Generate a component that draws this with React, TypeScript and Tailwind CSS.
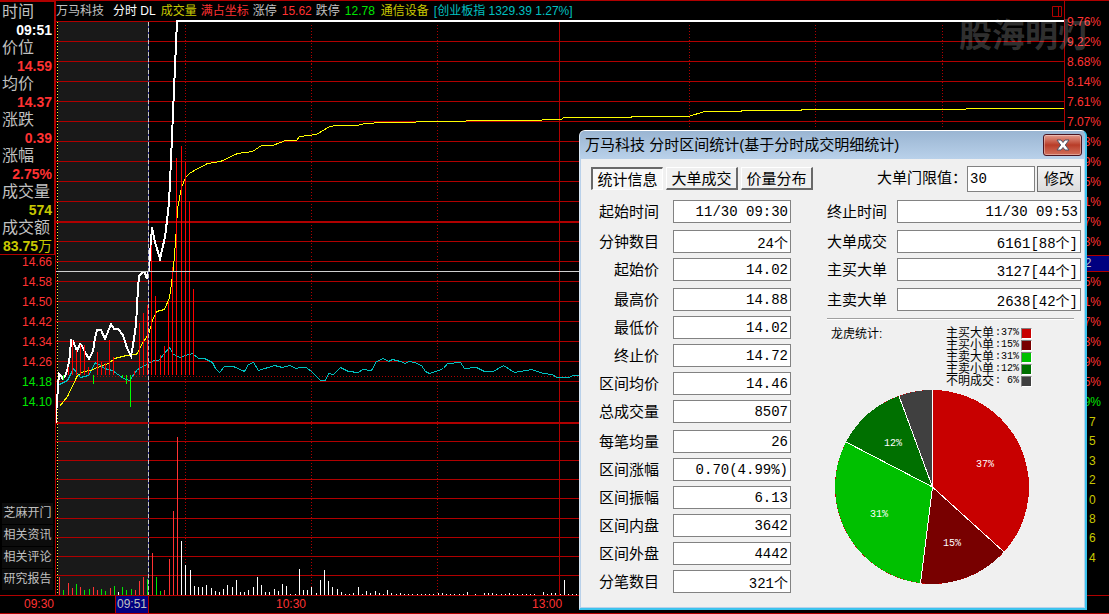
import { useState } from "react";
import clsx from "clsx";

type Row = { label: string; value: string };
type Bar = [x: number, y: number, color?: string];

const RED = "#b00000";
const UP = "#ff3232";
const DOWN = "#00e600";

const quotes = [
  { label: "时间", value: "09:51", tone: "text-white" },
  { label: "价位", value: "14.59", tone: "text-[#ff3232]" },
  { label: "均价", value: "14.37", tone: "text-[#ff3232]" },
  { label: "涨跌", value: "0.39", tone: "text-[#ff3232]" },
  { label: "涨幅", value: "2.75%", tone: "text-[#ff3232]" },
  { label: "成交量", value: "574", tone: "text-[#c8c800]" },
  { label: "成交额", value: "83.75万", tone: "text-[#c8c800]" },
];

const prices = ["14.66", "14.58", "14.50", "14.42", "14.34", "14.26", "14.18", "14.10"];

const percents = [
  "9.76%", "9.22%", "8.68%", "8.14%", "7.61%", "7.07%", "6.53%", "5.99%", "5.45%", "4.91%",
  "4.37%", "3.83%", "3.02", "2.75%", "2.21%", "1.67%", "1.13%", "0.59%", "0.05%", "0.49%",
];

const volumes = ["7", "5", "3", "2", "0", "8", "6", "4"];

const links = ["芝麻开门", "相关资讯", "相关评论", "研究报告"];

// Rows are grouped so that the wider gaps fall between groups
const leftGroups: Row[][] = [
  [{ label: "起始时间", value: "11/30 09:30" }],
  [
    { label: "分钟数目", value: "24个" },
    { label: "起始价", value: "14.02" },
  ],
  [
    { label: "最高价", value: "14.88" },
    { label: "最低价", value: "14.02" },
    { label: "终止价", value: "14.72" },
    { label: "区间均价", value: "14.46" },
    { label: "总成交量", value: "8507" },
  ],
  [
    { label: "每笔均量", value: "26" },
    { label: "区间涨幅", value: "0.70(4.99%)" },
    { label: "区间振幅", value: "6.13" },
    { label: "区间内盘", value: "3642" },
    { label: "区间外盘", value: "4442" },
    { label: "分笔数目", value: "321个" },
  ],
];

const rightGroups: Row[][] = [
  [{ label: "终止时间", value: "11/30 09:53" }],
  [
    { label: "大单成交", value: "6161[88个]" },
    { label: "主买大单", value: "3127[44个]" },
  ],
  [{ label: "主卖大单", value: "2638[42个]" }],
];

const legend = [
  { label: "主买大单", value: "37%", color: "bg-[#c80000]" },
  { label: "主买小单", value: "15%", color: "bg-[#780000]" },
  { label: "主卖大单", value: "31%", color: "bg-[#00c000]" },
  { label: "主卖小单", value: "12%", color: "bg-[#007000]" },
  { label: "不明成交", value: "6%", color: "bg-[#404040]" },
];

const tabs = ["统计信息", "大单成交", "价量分布"];

const gridRows = [
  21, 41, 61, 81, 101, 121, 141, 161, 181, 201, 241, 261, 281, 301, 321, 341, 361, 381, 401,
  441, 460, 479, 498, 518, 537, 556, 575,
];
const gridCols = [185, 311, 437, 689, 815, 942];

const priceLine =
  "55,422 56,422 56,415 58,387 59,374 61,376 63,379 66,374 68,367 70,355 71,340 73,341 77,351 80,344 82,346 85,352 89,359 93,351 95,338 97,330 101,330 105,339 111,324 114,329 118,329 123,335 127,348 131,356 133,345 136,325 138,288 139,276 143,272 145,273 147,279 149,268 150,255 152,227 155,242 160,259 165,237 168,212 169,203 171,160 174,90 177,21 1064,21";
const averageLine =
  "59,406 67,396 77,375 83,371 90,370 97,367 108,363 114,358 126,355 136,354 143,341 148,334 152,320 156,311 164,309 169,297 173,268 176,227 177,208 181,187 185,177 189,173 192,171 207,163 220,161 237,153 252,151 261,145 272,145 280,142 285,140 296,140 299,136 316,134 329,126 336,125 356,125 365,123 382,122 415,122 416,121 465,121 466,120 541,120 542,119 561,119 563,117 630,117 632,116 688,116 704,111 740,111 742,110 800,110 802,109 965,109 966,108 1064,108";
const indexLine =
  "59,384 67,380 73,368 80,377 88,375 95,362 100,365 104,368 112,370 123,378 129,380 137,369 148,363 153,360 158,360 164,353 169,347 173,354 180,357 185,355 192,353 198,358 204,358 212,362 215,368 219,372 224,366 233,366 244,371 248,364 253,362 258,370 274,365 282,367 289,365 296,368 299,367 306,367 312,372 320,380 325,380 328,373 333,374 340,367 348,371 358,372 362,369 371,370 376,361 383,358 388,361 392,359 400,361 405,363 408,361 414,362 421,365 425,371 429,373 438,370 443,368 447,363 460,362 464,368 476,367 484,371 493,371 503,365 514,372 531,369 543,373 552,374 556,377 568,377 573,375 580,375";

// Strength bars grow from the 375 line, up in red and down in green
const strength: Bar[] = [
  [63, 380], [68, 367], [72, 340], [76, 350], [80, 345], [84, 345], [88, 367], [93, 384],
  [97, 352], [101, 362], [105, 363], [109, 340], [113, 357], [122, 378], [126, 384], [130, 407],
  [134, 371], [139, 323], [143, 313], [147, 305], [151, 245], [155, 296], [160, 355], [164, 346],
  [168, 302], [172, 267], [176, 158], [181, 146], [185, 162], [189, 201], [193, 289],
];

const volumeBars: Bar[] = [
  [59, 577, UP], [63, 590, DOWN], [68, 583, UP], [72, 588, UP], [76, 584, DOWN], [80, 587, UP],
  [84, 590, DOWN], [89, 589, DOWN], [93, 587, UP], [97, 590, UP], [101, 589, DOWN],
  [105, 591, DOWN], [110, 588, UP], [114, 586, DOWN], [118, 592], [122, 587, DOWN],
  [126, 590, DOWN], [131, 589, DOWN], [135, 590, UP], [139, 581, UP], [143, 577, UP],
  [147, 579, DOWN], [152, 553, UP], [156, 577, DOWN], [160, 591, DOWN], [164, 590, UP],
  [169, 559, UP], [173, 511, UP], [177, 437, UP], [181, 541], [185, 565], [190, 570],
  [194, 586], [198, 587], [202, 587], [206, 585], [211, 588], [215, 591], [219, 592],
  [223, 589], [227, 585], [232, 587], [236, 580], [240, 592], [244, 592], [248, 590],
  [253, 587], [257, 577], [261, 585], [265, 592], [269, 592], [274, 589], [278, 591],
  [282, 584], [286, 586], [290, 594], [295, 594], [299, 569], [303, 590], [307, 590],
  [311, 587], [316, 593], [320, 580], [324, 570], [328, 581], [332, 587], [337, 589],
  [341, 592], [345, 594], [349, 594], [353, 593], [358, 587], [362, 594], [366, 591],
  [370, 593], [375, 591], [379, 593], [383, 594], [387, 590], [391, 593], [396, 594],
  [400, 593], [404, 594], [408, 594], [412, 594], [417, 594], [421, 594], [425, 594],
  [429, 594], [433, 594], [438, 593], [442, 593], [446, 594], [450, 594], [454, 594],
  [459, 594], [463, 594], [467, 592], [475, 594], [484, 593], [488, 593], [492, 593],
  [496, 594], [501, 594], [505, 594], [509, 593], [513, 594], [517, 594], [522, 594],
  [526, 594], [530, 594], [534, 594], [543, 592], [547, 594], [551, 593], [555, 593],
  [560, 594], [564, 580], [568, 594], [572, 594], [576, 594],
];

function Chart() {
  return (
    <svg
      className="block w-full flex-1 min-h-0"
      viewBox="56 20 1008 575"
      preserveAspectRatio="none"
      shapeRendering="crispEdges"
      fill="none"
    >
      <rect x="58" y="22" width="90" height="573" fill="#191919" />
      {gridRows.map((y) => (
        <rect key={y} x="55" y={y} width="1010" height="1" fill={RED} />
      ))}
      <g transform="translate(0.5 0.5)">
        {gridCols.map((x) => (
          <line key={x} x1={x} x2={x} y1="24" y2="595" stroke={RED} strokeDasharray="1 2" />
        ))}
        <line x1="93" x2="1064" y1="376" y2="376" stroke={RED} strokeDasharray="1 2" />
        <line x1="57" x2="57" y1="21" y2="595" stroke="#ffff32" strokeDasharray="1 2" />
      </g>
      <rect x="559" y="21" width="1" height="574" fill={RED} />
      <rect x="55" y="221" width="1010" height="2" fill={RED} />
      <rect x="55" y="422" width="1010" height="2" fill={RED} />

      {volumeBars.map(([x, y, color = "#ffffff"]) => (
        <rect key={x} x={x} y={y} width="1" height={595 - y} fill={color} />
      ))}

      <g transform="translate(0.5 0.5)">
        <polyline points={indexLine} stroke="#00c0c0" />
        <polyline points={averageLine} stroke="#ffff00" />
      </g>
      <polyline points={priceLine} stroke="#ffffff" strokeWidth="2" />
      {strength.map(([x, y]) => (
        <rect
          key={x}
          x={x}
          y={Math.min(y, 375)}
          width="1"
          height={Math.abs(375 - y)}
          fill={y > 375 ? "#00ff00" : "#ff0000"}
        />
      ))}

      {/* Crosshair */}
      <rect x="55" y="271" width="1010" height="1" fill="#d0d0d0" />
      <rect x="148" y="22" width="1" height="573" fill="#303090" />
      <line x1="148.5" x2="148.5" y1="22" y2="595" stroke="#c8c8c8" strokeDasharray="4 2" />
    </svg>
  );
}

function PieChart() {
  return (
    <svg className="w-[196px] h-[196px] shrink-0" viewBox="834 390 196 196" shapeRendering="crispEdges">
      <circle cx="932" cy="488" r="97" fill="#c80000" />
      <path d="M932 488 L1004 553 A97 97 0 0 1 920 584 Z" fill="#780000" />
      <path d="M932 488 L920 584 A97 97 0 0 1 846 443 Z" fill="#00c000" />
      <path d="M932 488 L846 443 A97 97 0 0 1 899 397 Z" fill="#007000" />
      <path d="M932 488 L899 397 A97 97 0 0 1 932 391 Z" fill="#404040" />
      <path
        d="M932.5 391V488L1004 553M932.5 488L920.5 584M932.5 488L846 443M932.5 488L899 397"
        fill="none"
        stroke="#ffffff"
      />
      <g fill="#ffffff" textAnchor="middle" className="font-['Liberation_Mono',monospace] text-[10px]">
        <text x="985" y="468">37%</text>
        <text x="952" y="547">15%</text>
        <text x="879" y="518">31%</text>
        <text x="893" y="447">12%</text>
      </g>
    </svg>
  );
}

function Fields({ groups, wide }: { groups: Row[][]; wide?: boolean }) {
  return (
    <div className="flex flex-col gap-[7px]">
      {groups.map((rows) => (
        <div key={rows[0].label} className="flex flex-col gap-[5px]">
          {rows.map((row) => (
            <label key={row.label} className="flex items-center h-[23px]">
              <span
                className={clsx(
                  "shrink-0 text-right text-[15px] leading-[22px]",
                  wide ? "w-[60px] mr-[10px]" : "w-[68px] mr-[14px]"
                )}
              >
                {row.label}
              </span>
              <input
                readOnly
                value={row.value}
                className={clsx(
                  "h-full min-w-0 border border-[#828282] bg-white px-[2px] text-right text-[14px] font-['Liberation_Mono','Noto_Sans_CJK_SC',monospace] outline-none",
                  wide ? "flex-1" : "w-[118px]"
                )}
              />
            </label>
          ))}
        </div>
      ))}
    </div>
  );
}

function StatsDialog() {
  const [active, setActive] = useState(tabs[0]);
  const [limit, setLimit] = useState("30");

  return (
    <div
      role="dialog"
      aria-labelledby="stats-title"
      className="absolute left-[579px] top-[129px] w-[508px] overflow-hidden rounded-t-[6px] border-t border-l border-t-white border-l-[#d8e6f4] border-r-2 border-b-2 border-r-[#3cc4ee] border-b-[#3cc4ee] bg-[#b9d1ea] text-black"
    >
      <div className="flex h-7 items-center justify-between bg-gradient-to-b from-[#9ab5d2] to-[#b9d1ea] pl-[5px] pr-[3px]">
        <h1 id="stats-title" className="text-[15px] leading-[22px]">
          万马科技 分时区间统计(基于分时成交明细统计)
        </h1>
        <button
          type="button"
          aria-label="关闭"
          className="flex h-[22px] w-[39px] items-center justify-center rounded-[3px] border border-[#4a1420] bg-gradient-to-b from-[#e29a8c] via-[#b83c28] to-[#d2705c] shadow-[inset_0_0_0_1px_rgba(255,255,255,0.35)]"
        >
          <svg className="h-3 w-[14px]" viewBox="0 0 14 12">
            <path
              d="M1 1H5L7 3.5L9 1H13L9.3 6L13 11H9L7 8.5L5 11H1L4.7 6Z"
              fill="#ffffff"
              stroke="#4e5468"
              strokeWidth="1"
            />
          </svg>
        </button>
      </div>

      <div className="mx-px mb-px bg-[#f0f0f0] pt-[6px] pb-[14px] pl-[10px] pr-[3px]">
        <div className="flex h-[27px] items-center justify-between">
          <div role="tablist" className="flex gap-[3px]">
            {tabs.map((tab) => (
              <button
                key={tab}
                type="button"
                role="tab"
                aria-selected={tab === active}
                onClick={() => setActive(tab)}
                className={clsx(
                  "flex h-[23px] w-[72px] items-center justify-center whitespace-nowrap text-[15px] leading-none",
                  tab === active
                    ? "border-t-2 border-l-2 border-r border-b border-t-[#696969] border-l-[#696969] border-r-white border-b-white bg-[#f8f8f8]"
                    : "border-t border-l border-r-2 border-b-2 border-t-white border-l-white border-r-[#696969] border-b-[#696969] bg-[#f0f0f0]"
                )}
              >
                {tab}
              </button>
            ))}
          </div>
          <div className="flex items-center">
            <label htmlFor="limit" className="text-[15px]">
              大单门限值：
            </label>
            <input
              id="limit"
              value={limit}
              onChange={(e) => setLimit(e.target.value)}
              className="mr-[2px] h-[26px] w-[68px] border border-[#828282] bg-white px-[2px] text-[14px] font-['Liberation_Mono',monospace] outline-none"
            />
            <button
              type="button"
              className="h-[26px] w-[44px] border border-[#707070] bg-gradient-to-b from-[#f4f4f4] to-[#dcdcdc] text-[15px] leading-none"
            >
              修改
            </button>
          </div>
        </div>

        <div className="mt-2 flex gap-9">
          <Fields groups={leftGroups} />

          <div className="flex min-w-0 flex-1 flex-col">
            <Fields groups={rightGroups} wide />
            <hr className="mt-[7px] mr-[7px] border-t border-b border-t-[#a0a0a0] border-b-white" />
            <div className="mt-[7px] flex justify-between pl-1 pr-[49px]">
              <h2 className="text-[12px] leading-[14px]">龙虎统计:</h2>
              <ul>
                {legend.map((item) => (
                  <li key={item.label} className="flex h-3 items-center justify-end text-[12px] leading-3">
                    {item.label}
                    <span className="w-[25px] whitespace-pre text-right font-['Liberation_Mono',monospace] text-[10px]">
                      {":" + item.value.padStart(3)}
                    </span>
                    <span
                      className={clsx(
                        "ml-[2px] size-[11px] border-t border-l border-r border-b border-t-[#808080] border-l-[#808080] border-r-white border-b-white",
                        item.color
                      )}
                    />
                  </li>
                ))}
              </ul>
            </div>
            <div className="pl-[7px] pt-[2px]">
              <PieChart />
            </div>
          </div>
        </div>
      </div>
    </div>
  );
}

export default function App() {
  return (
    <div className="relative flex h-screen flex-col overflow-hidden border-t border-b border-[#b00000] bg-black font-['Liberation_Sans','Noto_Sans_CJK_SC',sans-serif] text-[12px] text-[#c0c0c0]">
      <div className="flex min-h-0 flex-1">
        <aside className="flex w-[55px] shrink-0 flex-col">
          <dl className="border-t border-r border-b border-[#b00000]">
            {quotes.map((quote) => (
              <div key={quote.label} className="h-9">
                <dt className="pl-[2px] text-[16px] leading-5">{quote.label}</dt>
                <dd className={clsx("pr-[2px] text-right text-[14px] font-bold leading-4", quote.tone)}>
                  {quote.value.replace("万", "")}
                  {quote.value.endsWith("万") && <span className="font-normal">万</span>}
                </dd>
              </div>
            ))}
          </dl>
          <ul className="-mt-[3px] pr-[3px] text-right">
            {prices.map((price) => (
              <li
                key={price}
                className={clsx("h-5 leading-5", price < "14.20" ? "text-[#00e600]" : "text-[#ff3232]")}
              >
                {price}
              </li>
            ))}
          </ul>
          <nav className="mt-auto mb-[5px] flex flex-col gap-px px-[2px]">
            {links.map((link) => (
              <a key={link} href="#" className="h-[21px] bg-[#0c0c0c] text-center leading-5">
                {link}
              </a>
            ))}
          </nav>
        </aside>

        <main className="flex min-w-0 flex-1 flex-col border-l border-[#b00000]">
          <header className="flex h-[19px] shrink-0 items-center whitespace-nowrap pr-[2px] pt-px">
            <span className="mr-[9px]">万马科技</span>
            <span className="mr-[5px] text-white">分时 DL</span>
            <span className="mr-1 text-[#c8c800]">成交量</span>
            <span className="mr-1 text-[#ff3232]">满占坐标</span>
            <span className="mr-[5px]">涨停</span>
            <span className="mr-1 text-[#ff3232]">15.62</span>
            <span className="mr-[5px]">跌停</span>
            <span className="mr-[6px] text-[#00e600]">12.78</span>
            <span className="mr-[5px] text-[#c8c800]">通信设备</span>
            <span className="text-[#00c0c0]">[创业板指 1329.39 1.27%]</span>
            <svg className="ml-auto h-[11px] w-[10px]" viewBox="0 0 10 11" fill="none" stroke={RED}>
              <path d="M0.5 0.5H9.5V10.5H0.5ZM6.5 0.5V10.5" />
            </svg>
          </header>
          <Chart />
        </main>

        <aside className="w-[45px] shrink-0 border-l border-[#b00000] pt-[10px] text-[#ff3232]">
          <ul>
            {percents.map((percent, i) =>
              percent.endsWith("%") ? (
                <li key={percent} className={clsx("h-5 pl-[2px] leading-[22px]", i === 19 && "text-[#00e600]")}>
                  {percent}
                </li>
              ) : (
                <li
                  key={percent}
                  className="mt-1 mb-[-1px] h-[17px] border-t border-b border-[#b00000] bg-[#000080] pl-[3px] leading-[15px] text-[#c0c0c0]"
                >
                  {percent}
                </li>
              )
            )}
          </ul>
          <ul className="mt-px grid h-[155px] auto-rows-fr pl-6 leading-5 text-[#c8c800]">
            {volumes.map((volume) => (
              <li key={volume}>{volume}</li>
            ))}
          </ul>
        </aside>
      </div>

      <footer className="flex h-[18px] shrink-0 border-t border-[#b00000] leading-4 text-[#ff3232]">
        <span className="w-[54px] text-right">09:30</span>
        <span className="ml-[61px] w-[34px] border-l border-r border-[#b00000] bg-[#000080] text-center text-[#c0c0c0]">
          09:51
        </span>
        <span className="ml-[127px]">10:30</span>
        <span className="ml-[226px]">13:00</span>
      </footer>

      <div className="pointer-events-none absolute right-[18px] top-[12px] text-[33px] font-bold leading-[46px] text-white/20">
        股海明灯
      </div>
      <StatsDialog />
    </div>
  );
}
